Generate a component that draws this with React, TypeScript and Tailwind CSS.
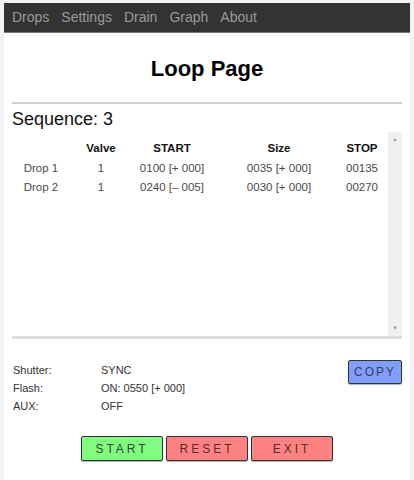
import React from "react";

const rows = [
  ["Drop 1", "1", "0100 [+ 000]", "0035 [+ 000]", "00135"],
  ["Drop 2", "1", "0240 [\u2013 005]", "0030 [+ 000]", "00270"],
];

const cols = "grid grid-cols-[58px_62px_80px_134px_32px]";

function Cell({ children, bold }: { children?: React.ReactNode; bold?: boolean }) {
  return (
    <div className={`flex justify-center whitespace-nowrap ${bold ? "font-bold text-[#111]" : "text-[#4a4a4a]"}`}>
      {children}
    </div>
  );
}

export default function App() {
  return (
    <div
      className="bg-[#f3f3f3] h-[480px] px-[4px] pt-[3px]"
      style={{ fontFamily: '"Liberation Sans", Arial, sans-serif' }}
    >
      <div className="bg-white h-[477px] flex flex-col">
        <nav className="bg-[#333333] h-[30px] flex items-center gap-[12px] pl-[8px] text-[14px] text-[#9a9a9a] border-b border-[#777]">
          <span>Drops</span>
          <span>Settings</span>
          <span>Drain</span>
          <span>Graph</span>
          <span>About</span>
        </nav>
        <h1 className="text-center font-bold text-[22px] text-black mt-[22px] leading-[28px]">Loop Page</h1>
        <div className="mx-[8px] mt-[19px] h-[2px] bg-[#cfcfcf]" />
        <div className="px-[8px] mt-[4px] text-[18px] text-[#111] leading-[22px]">Sequence: 3</div>
        <div className="mx-[8px] mt-[2px] h-[207px] flex border-b-[3px] border-[#dedede]">
          <div className="flex-1 pt-[7px] text-[11.5px] leading-[19px]">
            <div className={`${cols} mb-[1px]`}>
              <Cell bold />
              <Cell bold>Valve</Cell>
              <Cell bold>START</Cell>
              <Cell bold>Size</Cell>
              <Cell bold>STOP</Cell>
            </div>
            {rows.map((r) => (
              <div key={r[0]} className={cols}>
                {r.map((c, i) => (
                  <Cell key={i}>{c}</Cell>
                ))}
              </div>
            ))}
          </div>
          <div className="w-[14px] bg-[#f0f0f0] flex flex-col items-center justify-between py-[3px] text-[6px] text-[#a0a0a0]">
            <span>▲</span>
            <span>▼</span>
          </div>
        </div>
        <div className="px-[9px] mt-[22px] flex text-[11px] text-[#333] leading-[18px]">
          <div className="flex-1">
            <div className="flex">
              <span className="w-[88px]">Shutter:</span>
              <span>SYNC</span>
            </div>
            <div className="flex">
              <span className="w-[88px]">Flash:</span>
              <span>ON: 0550 [+ 000]</span>
            </div>
            <div className="flex">
              <span className="w-[88px]">AUX:</span>
              <span>OFF</span>
            </div>
          </div>
          <button className="mr-[-1px] mt-[-1px] w-[54px] h-[24px] bg-[#809eff] border border-[#333] rounded-[2px] text-[12px] tracking-[2px] text-[#3a3f55] shadow-[0_1px_1px_rgba(0,0,0,0.3)]">
            COPY
          </button>
        </div>
        <div className="flex justify-center gap-[3px] mt-[21px]">
          <button className="w-[82px] h-[25px] bg-[#80fc80] border border-[#333] rounded-[2px] text-[12px] tracking-[3px] text-[#2d4a2d] shadow-[0_1px_1px_rgba(0,0,0,0.3)]">
            START
          </button>
          <button className="w-[82px] h-[25px] bg-[#ff8282] border border-[#333] rounded-[2px] text-[12px] tracking-[3px] text-[#5a2a2a] shadow-[0_1px_1px_rgba(0,0,0,0.3)]">
            RESET
          </button>
          <button className="w-[82px] h-[25px] bg-[#ff8282] border border-[#333] rounded-[2px] text-[12px] tracking-[3px] text-[#5a2a2a] shadow-[0_1px_1px_rgba(0,0,0,0.3)]">
            EXIT
          </button>
        </div>
      </div>
    </div>
  );
}
